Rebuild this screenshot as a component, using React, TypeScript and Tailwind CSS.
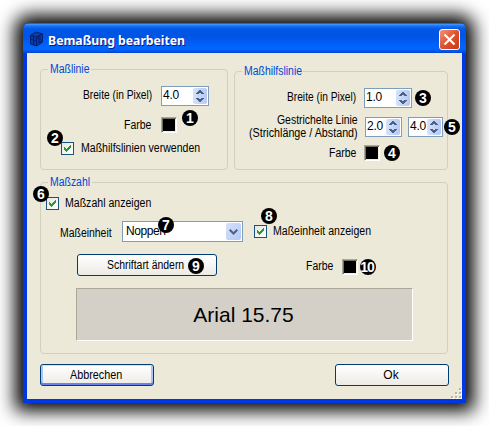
import type { ReactNode } from "react";

const ui = "font-['Liberation_Sans',Arial,sans-serif]";

/* Condensed dialog lettering; w is the box the narrowed text takes up. */
function T({ w, s = "scale-x-[.87]", children }: { w: string; s?: string; children: ReactNode }) {
  return (
    <span className={`block shrink-0 whitespace-nowrap ${w}`}>
      <span className={`inline-block origin-left ${s}`}>{children}</span>
    </span>
  );
}

function Badge({ n, at }: { n: number; at: string }) {
  return (
    <span className={`absolute z-10 flex size-4 items-center justify-center rounded-full bg-black text-[14px] leading-4 font-bold text-white ${n === 10 ? "pr-[2px] tracking-[-1px]" : ""} ${at}`}>
      {n}
    </span>
  );
}

function Group({ title, w, className, children }: { title: string; w: string; className: string; children: ReactNode }) {
  return (
    <section className={`relative rounded-[4px] border border-[#d0d0bf] ${className}`}>
      <h2 className="absolute -top-[8px] left-[7px] bg-[#ece9d8] px-[2px] text-[12px] leading-[15px] text-[#0046d5]"><T w={w}>{title}</T></h2>
      {children}
    </section>
  );
}

function Spinner({ value, className }: { value: string; className: string }) {
  return (
    <div className={`flex h-5 shrink-0 items-center justify-between border border-[#7f9db9] bg-white pr-px pl-px ${className}`}>
      <span className="-mt-[3px] w-4 text-[12px] leading-4 tracking-[-0.2px]">{value}</span>
      <span className="flex h-4 w-[14px] items-center justify-center rounded-[2px] bg-linear-to-r from-[#d6e2fd] to-[#b5c8f5]">
        <svg width="8" height="12" viewBox="0 0 8 12" fill="#4d6185" shapeRendering="crispEdges">
          <path d="M3 0h2v1h1v1h1v1h1v1H5V3H3v1H0V3h1V2h1V1h1zM0 8h3v1h2V8h3v1H7v1H6v1H5v1H3v-1H2v-1H1V9H0z" />
        </svg>
      </span>
    </div>
  );
}

function Swatch() {
  return (
    <span className="size-4 shrink-0 border border-t-[#aca899] border-r-white border-b-white border-l-[#aca899] bg-black shadow-[inset_1px_1px_#716f64,inset_-1px_-1px_#f1efe2]" />
  );
}

function Check() {
  return (
    <span className="flex size-[13px] shrink-0 items-center justify-center border border-[#1c5180] bg-linear-to-br from-[#e5e5e0] to-white">
      <svg width="7" height="7" viewBox="0 0 7 7" fill="#21a121" shapeRendering="crispEdges">
        <path d="M0 2h1v1h1v1h1V3h1V2h1V1h1V0h1v3H6v1H5v1H4v1H3v1H2V6H1V5H0z" />
      </svg>
    </span>
  );
}

export default function App() {
  return (
    <main className="h-[426px] w-[489px] overflow-hidden bg-white p-[23px]">
      <div className={`relative flex h-[380px] w-[443px] flex-col rounded-t-[6px] bg-[#0037e5] px-1 pb-1 text-[12px] leading-[15px] text-black shadow-[0_0_18px_8px_#000] ${ui}`}>
        <header className="-mx-1 flex h-[30px] shrink-0 items-center rounded-t-[6px] bg-[linear-gradient(180deg,#0a50d0_0%,#3b91ff_5%,#1772f5_10%,#0058e6_20%,#0054e3_45%,#0061fc_72%,#0066ff_86%,#0058e8_94%,#0043cf_100%)] pr-[6px] pl-[7px]">
          <svg width="13" height="16" viewBox="0 0 13 16" className="mt-[1px]" stroke="#001d72" fill="#0b3da8">
            <path d="M.5 4.500 6 1l6.500 2v8L6.500 15l-6-2z" />
            <path d="m.5 4.500 6 1.500 6-3M6.500 6v9M3.500 5v9M8 5v3h2V4M9 9v3h2V8M1 8l5 2" fill="none" />
          </svg>
          <h1 className="mt-[3px] ml-[5px] font-['Noto_Sans',sans-serif] text-[13px] leading-4 font-bold whitespace-nowrap text-white [text-shadow:1px_1px_#0a1883]"><T w="w-[140px]" s="scale-x-[.94]">Bemaßung bearbeiten</T></h1>
          <span className="mt-[2px] ml-auto flex size-[21px] items-center justify-center rounded-[3px] border border-white bg-linear-to-br from-[#ef9478] via-[#e0512b] to-[#c63b12]">
            <svg width="13" height="13" viewBox="0 0 13 13" stroke="white" strokeWidth="2.2"><path d="m1.500 1.500 10 10m0-10-10 10" /></svg>
          </span>
        </header>

        <div className="flex h-[346px] flex-col bg-[#ece9d8] px-[13px] pt-4">
          <div className="flex h-[101px] items-end gap-[6px]">
            <Group title="Maßlinie" w="w-[39px]" className="h-[101px] w-[188px]">
              <div className="mt-4 flex items-center justify-end pr-[18px]">
                <div className="mr-[9px] -mt-px"><T w="w-[69px]" s="scale-x-[.85]">Breite (in Pixel)</T></div>
                <Spinner value="4.0" className="w-12" />
              </div>
              <div className="mt-[11px] flex items-center justify-end pr-[50px]">
                <div className="mr-[10px]"><T w="w-[27px]">Farbe</T></div><Swatch />
              </div>
              <div className="mt-[8px] flex items-center gap-[7px] pl-5">
                <Check /><T w="w-[119px]" s="scale-x-[.88]">Maßhilfslinien verwenden</T>
              </div>
              <Badge n={1} at="top-[40px] left-[141px]" />
              <Badge n={2} at="top-[60px] left-[6px]" />
            </Group>
            <Group title="Maßhilfslinie" w="w-[57px]" className="h-[99px] w-[214px]">
              <div className="mt-4 flex items-center pl-[52px]">
                <div className="mr-[8px] -mt-px"><T w="w-[69px]" s="scale-x-[.85]">Breite (in Pixel)</T></div>
                <Spinner value="1.0" className="w-12" />
              </div>
              <div className="mt-[8px] flex h-[22px] items-center justify-end pr-[4px]">
                <div className="mr-[7px] flex flex-col items-end leading-[13px]">
                  <T w="w-[81px]">Gestrichelte Linie</T>
                  <T w="w-[109px]" s="scale-x-[.895]">(Strichlänge / Abstand)</T>
                </div>
                <Spinner value="2.0" className="mr-[6px] w-[37px]" />
                <Spinner value="4.0" className="w-[35px]" />
              </div>
              <div className="mt-[7px] flex items-center justify-end pr-[67px]">
                <div className="mr-[7px]"><T w="w-[28px]">Farbe</T></div><Swatch />
              </div>
              <Badge n={3} at="top-[18px] left-[180px]" />
              <Badge n={5} at="top-[47px] left-[209px]" />
              <Badge n={4} at="top-[73px] left-[149px]" />
            </Group>
          </div>

          <Group title="Maßzahl" w="w-[40px]" className="mt-[12px] h-[172px] w-[408px]">
            <div className="mt-[13px] flex items-center gap-[6px] pl-[5px]">
              <Check /><T w="w-[86px]" s="scale-x-[.88]">Maßzahl anzeigen</T>
            </div>
            <div className="mt-[10px] flex h-[21px] items-center pl-[19px]">
              <div className="w-[62px] pt-[3px]"><T w="w-[52px]">Maßeinheit</T></div>
              <div className="flex h-[21px] w-[121px] items-center justify-between border border-[#7f9db9] bg-white pr-px pl-[3px]">
                <span className="-mt-px tracking-[-0.4px]">Noppen</span>
                <span className="flex h-[17px] w-[15px] items-center justify-center rounded-[2px] bg-linear-to-br from-[#d6e2fd] to-[#b5c8f5]">
                  <svg width="9" height="6" viewBox="0 0 9 6" fill="none" stroke="#4d6185" strokeWidth="2"><path d="m.7.7 3.800 3.800L8.300.7" /></svg>
                </span>
              </div>
              <div className="ml-[11px] flex items-center gap-[6px]"><Check /><T w="w-[98px]" s="scale-x-[.88]">Maßeinheit anzeigen</T></div>
            </div>
            <div className="mt-[12px] flex h-[22px] items-center pl-9">
              <button className="h-[22px] w-[140px] shrink-0 rounded-[3px] border border-[#003c74] bg-linear-to-b from-white to-[#ecebe5] pl-[29px] text-left"><T w="w-[78px]">Schriftart ändern</T></button>
              <div className="mt-[2px] mr-[9px] ml-[89px]"><T w="w-[27px]">Farbe</T></div><div className="mt-[3px] flex"><Swatch /></div>
            </div>
            <div className="mt-[12px] ml-[35px] flex h-[53px] w-[337px] items-center justify-center border border-t-[#aca899] border-r-white border-b-white border-l-[#aca899] bg-[#d4d0c8] pr-[2px] text-[21px] leading-6 text-black">Arial 15.75</div>
            <Badge n={6} at="top-[3px] -left-[8px]" />
            <Badge n={7} at="top-[34px] left-[117px]" />
            <Badge n={8} at="top-[25px] left-[220px]" />
            <Badge n={9} at="top-[75px] left-[147px]" />
            <Badge n={10} at="top-[76px] left-[319px]" />
          </Group>

          <footer className="mt-[10px] flex justify-between">
            <button className="h-[22px] w-[114px] rounded-[3px] border border-[#003c74] bg-linear-to-b from-white to-[#ecebe5] pl-[29px] text-left shadow-[inset_0_1px_#cee7ff,inset_0_-2px_#6982ee,inset_2px_0_#a9c4f5,inset_-2px_0_#a9c4f5]"><T w="w-[52px]" s="scale-x-[.9]">Abbrechen</T></button>
            <button className="h-[22px] w-[114px] rounded-[3px] border border-[#003c74] bg-linear-to-b from-white to-[#ecebe5] pr-[2px]">Ok</button>
          </footer>
          <svg width="12" height="12" viewBox="0 0 12 12" className="mt-px -mr-[13px] self-end" shapeRendering="crispEdges">
            <path d="M10 2h2v2h-2zM6 6h2v2H6zM10 6h2v2h-2zM2 10h2v2H2zM6 10h2v2H6zM10 10h2v2h-2z" fill="white" />
            <path d="M9 1h2v2H9zM5 5h2v2H5zM9 5h2v2H9zM1 9h2v2H1zM5 9h2v2H5zM9 9h2v2H9z" fill="#b8b4a3" />
          </svg>
        </div>
      </div>
    </main>
  );
}
